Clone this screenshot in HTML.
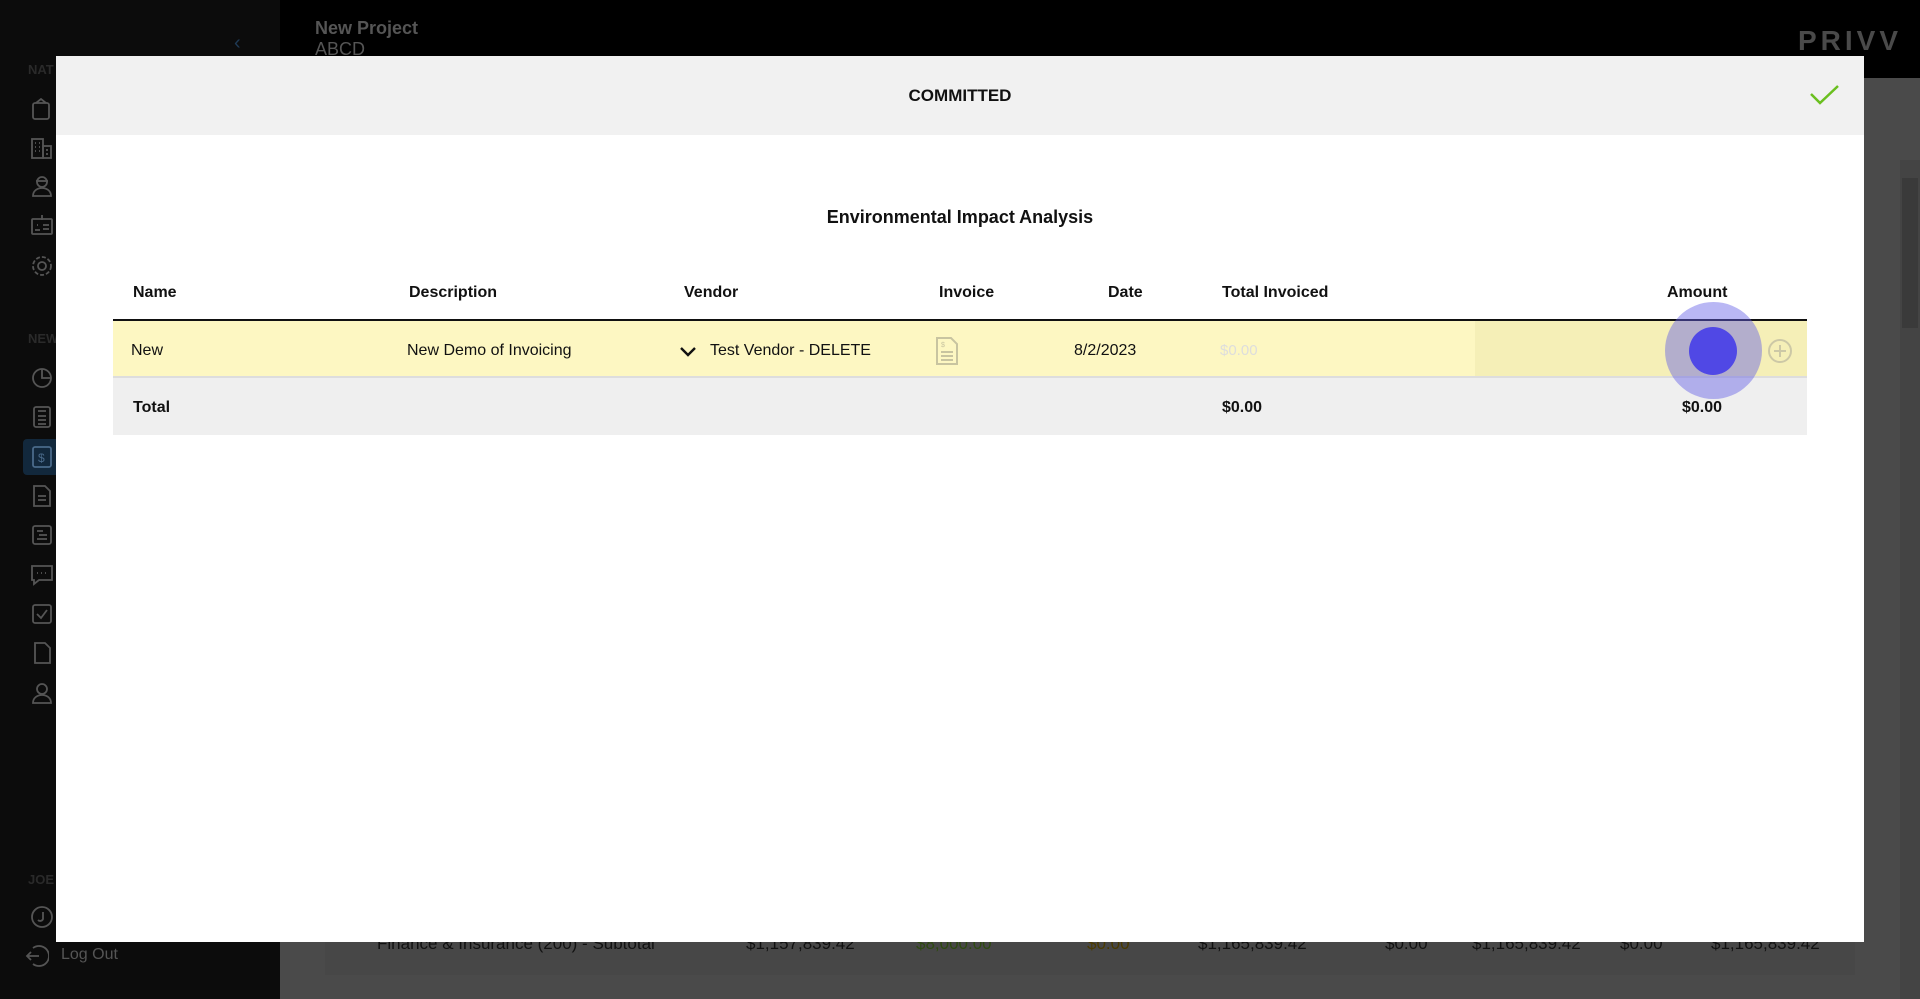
<!DOCTYPE html>
<html><head><meta charset="utf-8"><style>
*{margin:0;padding:0;box-sizing:border-box}
body{width:1920px;height:999px;overflow:hidden;background:#4a4a4a;font-family:"Liberation Sans",Arial,sans-serif;position:relative}
.abs{position:absolute}
.side{left:0;top:0;width:280px;height:999px;background:#0c0c0c}
.top{left:280px;top:0;width:1640px;height:78px;background:#000}
.ic{position:absolute;left:30px;width:24px;height:24px}
.lbl{position:absolute;left:28px;color:#2a2a2a;font-size:13px;font-weight:bold}
.modal{left:56px;top:56px;width:1808px;height:886px;background:#fff}
.mh{position:absolute;left:0;top:0;width:1808px;height:79px;background:#f1f1f1}
.t{position:absolute;font-size:16px;color:#111;white-space:nowrap}
.b{font-weight:bold}
.bt{position:absolute;top:934px;font-size:17px;color:#111;white-space:nowrap}
</style></head><body>
<div class="abs side">
 <div class="abs" style="left:234px;top:32px;color:#1f3a55;font-size:20px">‹</div>
 <div class="lbl" style="top:62px">NAT</div>
 <div class="lbl" style="top:331px">NEW</div>
 <div class="lbl" style="top:872px">JOE</div>
 <svg class="ic" style="top:97px" viewBox="0 0 24 24" fill="none" stroke="#555" stroke-width="1.8"><rect x="3" y="6" width="16" height="16" rx="2"/><path d="M6 6 L11 2 L16 6"/></svg>
 <svg class="ic" style="top:136px" viewBox="0 0 24 24" fill="none" stroke="#555" stroke-width="1.8"><rect x="2" y="3" width="11" height="19"/><rect x="13" y="10" width="8" height="12"/><path d="M5 7h1M9 7h1M5 11h1M9 11h1M5 15h1M9 15h1M16 14h2M16 18h2"/></svg>
 <svg class="ic" style="top:174px" viewBox="0 0 24 24" fill="none" stroke="#555" stroke-width="1.8"><circle cx="12" cy="8" r="5"/><path d="M6 7h12"/><path d="M3 22c0-5 4-8 9-8s9 3 9 8z"/></svg>
 <svg class="ic" style="top:213px" viewBox="0 0 24 24" fill="none" stroke="#555" stroke-width="1.8"><rect x="2" y="6" width="20" height="15" rx="1"/><path d="M12 2v5M13 12h6M13 16h6M5 17h5M7 12h1"/></svg>
 <svg class="ic" style="top:254px" viewBox="0 0 24 24" fill="none" stroke="#555" stroke-width="1.8"><circle cx="12" cy="12" r="4"/><circle cx="12" cy="12" r="9" stroke-dasharray="4 2"/></svg>
 <svg class="ic" style="top:366px" viewBox="0 0 24 24" fill="none" stroke="#555" stroke-width="1.8"><circle cx="12" cy="12" r="9"/><path d="M12 3v9h9"/></svg>
 <svg class="ic" style="top:405px" viewBox="0 0 24 24" fill="none" stroke="#555" stroke-width="1.8"><rect x="4" y="2" width="16" height="20" rx="2"/><path d="M8 6h8M8 11h8M8 15h8M8 19h8"/></svg>
 <div class="abs" style="left:23px;top:439px;width:38px;height:36px;background:#12283c;border-radius:4px"></div>
 <svg class="ic" style="top:445px" viewBox="0 0 24 24" fill="none" stroke="#4a6a8a" stroke-width="1.8"><rect x="3" y="2" width="18" height="20" rx="2"/><text x="8" y="17" font-size="12" fill="#4a6a8a" stroke="none">$</text></svg>
 <svg class="ic" style="top:484px" viewBox="0 0 24 24" fill="none" stroke="#555" stroke-width="1.8"><path d="M4 2h11l5 5v15H4z"/><path d="M8 12h8M8 16h8"/></svg>
 <svg class="ic" style="top:523px" viewBox="0 0 24 24" fill="none" stroke="#555" stroke-width="1.8"><rect x="3" y="3" width="18" height="18" rx="2"/><path d="M7 8h6M9 12h8M7 16h10"/></svg>
 <svg class="ic" style="top:563px" viewBox="0 0 24 24" fill="none" stroke="#555" stroke-width="1.8"><path d="M2 3h20v14H9l-5 4v-4H2z"/><path d="M7 10h1M11 10h1M15 10h1"/></svg>
 <svg class="ic" style="top:602px" viewBox="0 0 24 24" fill="none" stroke="#555" stroke-width="1.8"><rect x="3" y="3" width="18" height="18" rx="2"/><path d="M7 12l4 4 6-8"/></svg>
 <svg class="ic" style="top:641px" viewBox="0 0 24 24" fill="none" stroke="#555" stroke-width="1.8"><path d="M5 2h10l5 5v15H5z"/></svg>
 <svg class="ic" style="top:681px" viewBox="0 0 24 24" fill="none" stroke="#555" stroke-width="1.8"><circle cx="12" cy="8" r="5"/><path d="M3 22c0-5 4-8 9-8s9 3 9 8z"/></svg>
 <svg class="ic" style="top:905px" viewBox="0 0 24 24" fill="none" stroke="#555" stroke-width="1.8"><circle cx="12" cy="12" r="10"/><path d="M13 7v7a3 3 0 0 1-5 1"/></svg>
 <svg class="ic" style="top:944px;left:25px" viewBox="0 0 24 24" fill="none" stroke="#555" stroke-width="1.8"><path d="M8 4a10 10 0 1 1 0 16"/><path d="M2 12h12M6 8l-4 4 4 4"/></svg>
 <div class="abs" style="left:61px;top:946px;color:#555;font-size:16px">Log Out</div>
</div>
<div class="abs top">
 <div class="abs" style="left:35px;top:18px;color:#555;font-size:18px;font-weight:bold">New Project</div>
 <div class="abs" style="left:35px;top:39px;color:#555;font-size:18px">ABCD</div>
 <div class="abs" style="left:1518px;top:25px;color:#4a4a4a;font-size:28px;font-weight:bold;letter-spacing:4px">PRIVV</div>
</div>
<div class="abs" style="left:1900px;top:160px;width:20px;height:839px;background:#444"></div>
<div class="abs" style="left:1902px;top:178px;width:16px;height:150px;background:#3a3a3a"></div>
<div class="abs" style="left:325px;top:930px;width:1530px;height:45px;background:#474747"></div>
<div class="bt" style="left:377px">Finance &amp; Insurance (200) - Subtotal</div>
<div class="bt" style="left:746px">$1,157,839.42</div>
<div class="bt" style="left:916px;color:#2e4a10">$8,000.00</div>
<div class="bt" style="left:1087px;color:#4a3a00">$0.00</div>
<div class="bt" style="left:1198px">$1,165,839.42</div>
<div class="bt" style="left:1385px">$0.00</div>
<div class="bt" style="left:1472px">$1,165,839.42</div>
<div class="bt" style="left:1620px">$0.00</div>
<div class="bt" style="left:1711px">$1,165,839.42</div>
<div class="abs modal">
 <div class="mh"></div>
 <div class="t b" style="left:0;width:1808px;text-align:center;top:30px;font-size:17px">COMMITTED</div>
 <svg class="abs" style="left:1753px;top:28px" width="32" height="22" viewBox="0 0 32 22"><path d="M2 10 L11 19 L29 2" fill="none" stroke="#6abf1f" stroke-width="2.5"/></svg>
 <div class="t b" style="left:0;width:1808px;text-align:center;top:151px;font-size:18px">Environmental Impact Analysis</div>
 <div class="t b" style="left:77px;top:228px">Name</div>
 <div class="t b" style="left:353px;top:228px">Description</div>
 <div class="t b" style="left:628px;top:228px">Vendor</div>
 <div class="t b" style="left:883px;top:228px">Invoice</div>
 <div class="t b" style="left:1052px;top:228px">Date</div>
 <div class="t b" style="left:1166px;top:228px">Total Invoiced</div>
 <div class="t b" style="left:1611px;top:228px">Amount</div>
 <div class="abs" style="left:57px;top:263px;width:1694px;height:2px;background:#111"></div>
 <div class="abs" style="left:57px;top:265px;width:1694px;height:57px;background:#fdf7c2;border-bottom:2px solid #ddd"></div>
 <div class="abs" style="left:1419px;top:265px;width:332px;height:55px;background:#f5efb7"></div>
 <div class="abs" style="left:57px;top:322px;width:1694px;height:57px;background:#efefef"></div>
 <div class="t" style="left:75px;top:286px">New</div>
 <div class="t" style="left:351px;top:286px">New Demo of Invoicing</div>
 <svg class="abs" style="left:623px;top:290px" width="18" height="12" viewBox="0 0 18 12"><path d="M2 2 L9 9 L16 2" fill="none" stroke="#111" stroke-width="2.4"/></svg>
 <div class="t" style="left:654px;top:286px">Test Vendor - DELETE</div>
 <svg class="abs" style="left:879px;top:280px" width="24" height="30" viewBox="0 0 24 30"><path d="M2 2h14l6 6v20H2z" fill="none" stroke="#c8c4a0" stroke-width="2"/><path d="M6 16h12M6 20h12M6 24h12" stroke="#c8c4a0" stroke-width="2"/><text x="6" y="11" font-size="7" fill="#c8c4a0">$</text></svg>
 <div class="t" style="left:1018px;top:286px">8/2/2023</div>
 <div class="t" style="left:1164px;top:286px;color:#ddd;font-size:15px">$0.00</div>
 <div class="abs" style="left:1609px;top:246px;width:97px;height:97px;border-radius:50%;background:rgba(100,95,230,0.45)"></div>
 <div class="abs" style="left:1633px;top:271px;width:48px;height:48px;border-radius:50%;background:#5048e5"></div>
 <svg class="abs" style="left:1711px;top:282px" width="26" height="26" viewBox="0 0 26 26"><circle cx="13" cy="13" r="11" fill="none" stroke="#ccc8a6" stroke-width="2"/><path d="M13 7v12M7 13h12" stroke="#ccc8a6" stroke-width="2"/></svg>
 <div class="t b" style="left:77px;top:343px">Total</div>
 <div class="t b" style="left:1166px;top:343px">$0.00</div>
 <div class="t b" style="left:1626px;top:343px">$0.00</div>
</div>
</body></html>
